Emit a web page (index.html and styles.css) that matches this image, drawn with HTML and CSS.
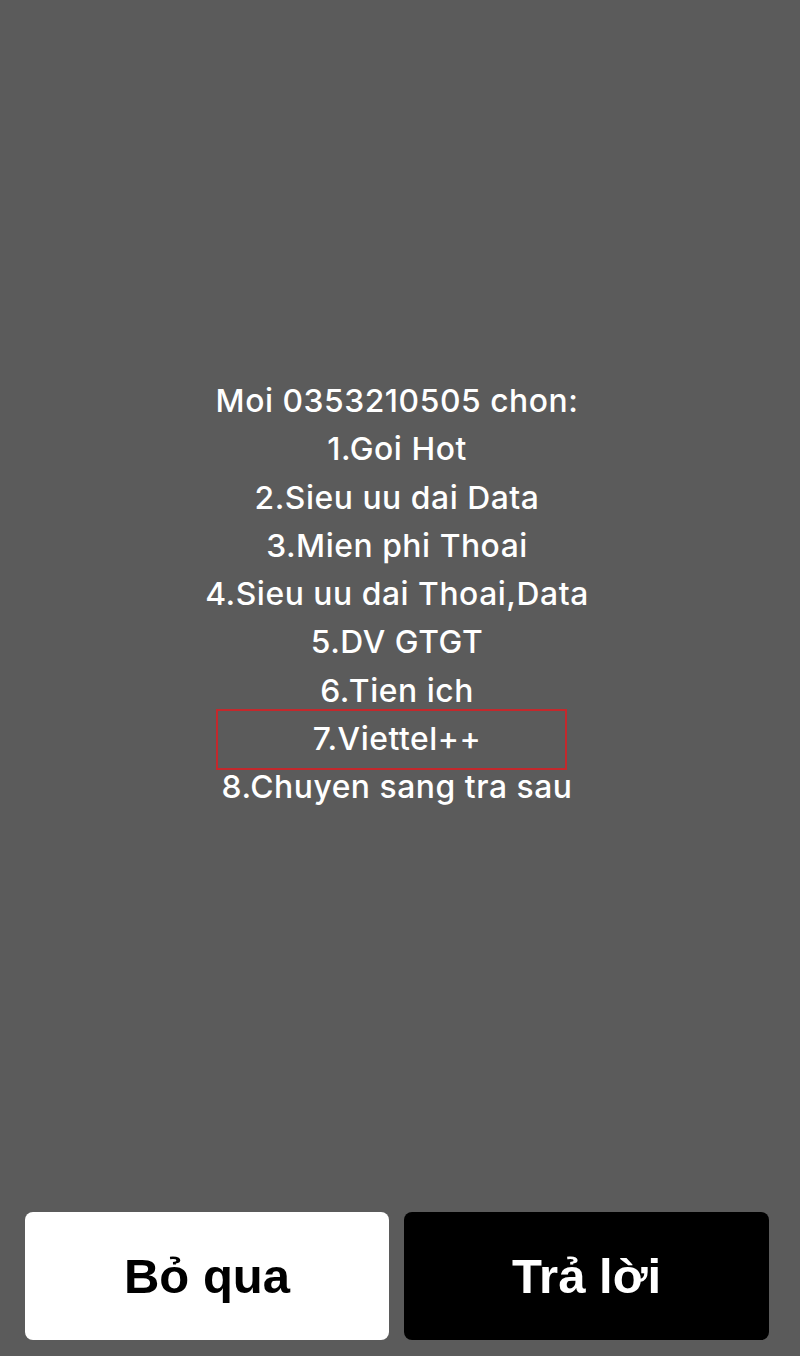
FILE: index.html
```html
<!DOCTYPE html>
<html lang="vi">
<head>
<meta charset="utf-8">
<title>USSD</title>
<link rel="stylesheet" href="styles.css">
</head>
<body>
<div class="screen">
  <div class="message">
    <div class="line">Moi 0353210505 chon:</div>
    <div class="line">1.Goi Hot</div>
    <div class="line">2.Sieu uu dai Data</div>
    <div class="line">3.Mien phi Thoai</div>
    <div class="line">4.Sieu uu dai Thoai,Data</div>
    <div class="line">5.DV GTGT</div>
    <div class="line">6.Tien ich</div>
    <div class="line line-marked">7.Viettel++</div>
    <div class="line">8.Chuyen sang tra sau</div>
  </div>
  <div class="actions">
    <button class="btn btn-skip">Bỏ qua</button>
    <button class="btn btn-reply">Trả lời</button>
  </div>
</div>
</body>
</html>
```
FILE: styles.css
```css
html, body {
  margin: 0;
  padding: 0;
  background: #5b5b5b;
}
.screen {
  height: 1356px;
  display: flex;
  flex-direction: column;
}
.message {
  flex: 1;
  padding: 377px 31px 0 25px;
  color: #ffffff;
  font-family: Inter, "Noto Sans", sans-serif;
  font-weight: 500;
  font-size: 31.8px;
  letter-spacing: 0.55px;
  line-height: 48.25px;
  text-align: center;
}
.line {
  position: relative;
  white-space: nowrap;
}
.line-marked::after {
  content: "";
  position: absolute;
  left: 191px;
  top: -6px;
  width: 351px;
  height: 61px;
  box-sizing: border-box;
  border: 2px solid #c4282c;
}
.actions {
  display: grid;
  grid-template-columns: 364px 365px;
  column-gap: 15px;
  padding: 0 31px 16px 25px;
}
.btn {
  height: 128px;
  border: none;
  border-radius: 8px;
  font-family: "Liberation Sans", Arial, sans-serif;
  font-weight: 700;
  font-size: 49px;
  padding: 0;
  margin: 0;
}
.btn-skip {
  background: #ffffff;
  color: #000000;
}
.btn-reply {
  background: #000000;
  color: #ffffff;
}
```
